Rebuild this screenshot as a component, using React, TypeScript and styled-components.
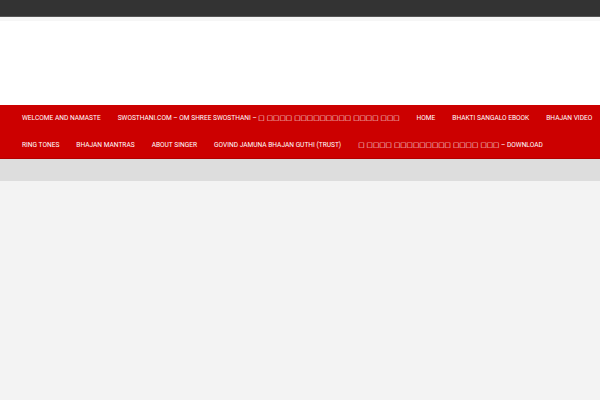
import React from 'react';
import styled, { createGlobalStyle } from 'styled-components';

const GlobalStyle = createGlobalStyle`
  html, body {
    margin: 0;
    padding: 0;
    background: #f3f3f3;
    font-family: Roboto, "Liberation Sans", sans-serif;
  }
`;

const TopBar = styled.div`
  height: 16px;
  background: #333333;
  border-bottom: 1px solid #555555;
`;

const Masthead = styled.header`
  height: 88px;
  background: #ffffff;
  border-top: 4px solid #f6f6f6;
  box-sizing: border-box;
`;

const Nav = styled.nav`
  background: #cc0000;
  border-bottom: 1px solid #b30000;
  padding: 0 0 0 22px;
  display: flex;
  flex-wrap: wrap;
  column-gap: 17px;
`;

const NavItem = styled.a`
  display: block;
  height: 26.5px;
  line-height: 26.5px;
  color: #ffffff;
  font-size: 6.6px;
  text-transform: uppercase;
  text-decoration: none;
  white-space: nowrap;
`;

const Tofu = styled.span`
  font-family: "DejaVu Sans", sans-serif;
  font-size: 6.7px;
  vertical-align: top;
`;

const SubBar = styled.div`
  height: 22px;
  background: #dddddd;
`;

const Content = styled.main`
  min-height: 220px;
  background: #f3f3f3;
`;

const odia = '□ □□□□ □□□□□□□□□ □□□□ □□□';

const items: { key: string; before?: string; tofu?: boolean; after?: string }[] = [
  { key: 'welcome', before: 'Welcome and Namaste' },
  { key: 'swosthani', before: 'swosthani.com – Om Shree Swosthani – ', tofu: true },
  { key: 'home', before: 'Home' },
  { key: 'ebook', before: 'Bhakti Sangalo Ebook' },
  { key: 'video', before: 'Bhajan Video' },
  { key: 'ring', before: 'Ring Tones' },
  { key: 'mantras', before: 'Bhajan Mantras' },
  { key: 'singer', before: 'About Singer' },
  { key: 'trust', before: 'Govind Jamuna Bhajan Guthi (Trust)' },
  { key: 'download', tofu: true, after: ' – Download' },
];

export default function App() {
  return (
    <>
      <GlobalStyle />
      <TopBar />
      <Masthead />
      <Nav>
        {items.map((it) => (
          <NavItem key={it.key} href="#">
            {it.before}
            {it.tofu && <Tofu>{odia}</Tofu>}
            {it.after}
          </NavItem>
        ))}
      </Nav>
      <SubBar />
      <Content />
    </>
  );
}
